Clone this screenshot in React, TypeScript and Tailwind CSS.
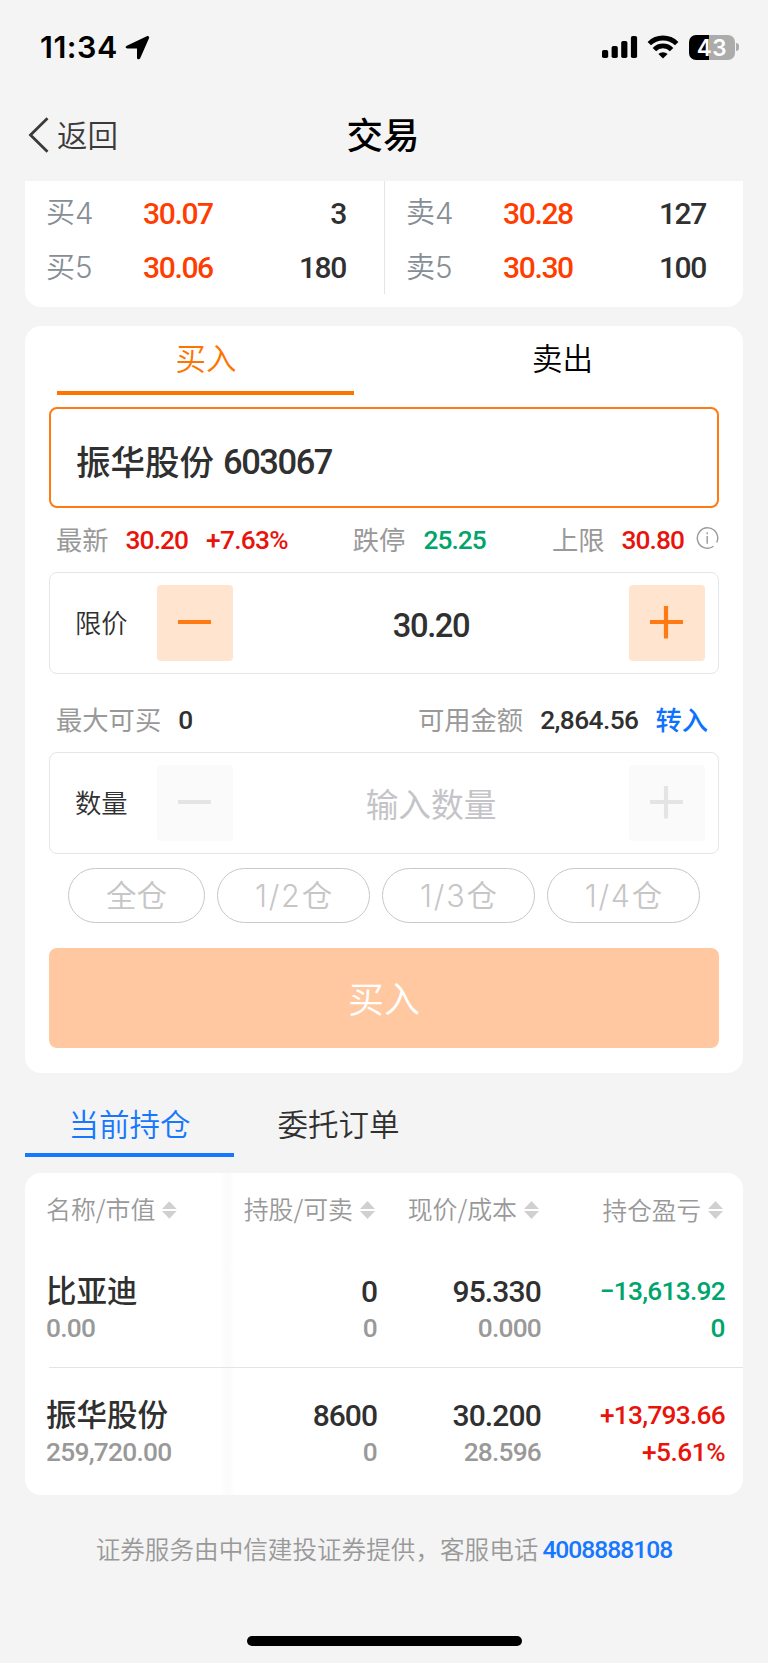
import { clsx } from "clsx";
import type { ReactNode } from "react";

const holdings = [
  {
    name: "比亚迪",
    value: "0.00",
    shares: "0",
    sellable: "0",
    price: "95.330",
    cost: "0.000",
    profit: "−13,613.92",
    rate: "0",
    up: false,
  },
  {
    name: "振华股份",
    value: "259,720.00",
    shares: "8600",
    sellable: "0",
    price: "30.200",
    cost: "28.596",
    profit: "+13,793.66",
    rate: "+5.61%",
    up: true,
  },
];

function Num({ children, className }: { children: ReactNode; className?: string }) {
  return (
    <span className={clsx("font-['Roboto',sans-serif] font-medium whitespace-nowrap", className)}>
      {children}
    </span>
  );
}

function StatusBar() {
  return (
    <div className="flex h-[95px] items-center pr-[29px] pb-[1px] pl-[40px]">
      <span className="font-['Inter',sans-serif] text-[30.500px] leading-[36px] font-semibold tracking-[0.5px] text-black">
        11:34
      </span>
      <svg className="ml-[7px] h-[25px] w-[25px]" viewBox="0 0 25 25">
        <path d="M1.800 10.800 21.800 1.200C23.400.500 24.700 1.800 24 3.300L15.200 23.200C14.500 24.900 12 24.500 12 22.700V13.500H2.500C.500 13.500 0 11.700 1.800 10.800Z" />
      </svg>

      <div className="ml-auto flex items-center">
        <svg className="h-[24px] w-[36px]" viewBox="0 0 36 24">
          <rect x="0" y="15" width="6.200" height="8" rx="1.800" />
          <rect x="9.600" y="11" width="6.200" height="12" rx="1.800" />
          <rect x="19.200" y="6" width="6.200" height="17" rx="1.800" />
          <rect x="28.900" y="1" width="6.200" height="22" rx="1.800" />
        </svg>
        <svg className="ml-[9px] h-[24px] w-[32px]" viewBox="0 0 32 24">
          <g fill="none" stroke="#000" strokeWidth="4.800">
            <path d="M2.300 8.600a19.500 19.500 0 0 1 27.400 0" />
            <path d="M7.400 14.600a12 12 0 0 1 17.200 0" />
          </g>
          <path d="M11.400 19a6.600 6.600 0 0 1 9.200 0L16 23.600Z" />
        </svg>
        {/* Battery, 43% filled */}
        <div className="ml-[10px] flex h-[25px] w-[46px] items-center justify-center rounded-[7px] bg-[linear-gradient(90deg,#000_43%,#acacac_43%)]">
          <span className="font-['Inter',sans-serif] text-[22.500px] leading-[25px] font-semibold tracking-[0.5px] text-white">
            43
          </span>
        </div>
        <div className="ml-[1px] h-[8px] w-[3px] rounded-r-full bg-[#acacac]" />
      </div>
    </div>
  );
}

function NavBar() {
  return (
    <div className="grid h-[86px] grid-cols-3 items-center px-[28px] pb-[6px]">
      <div className="flex items-center text-[30.500px] text-[#3a3a3a]">
        <svg className="h-[36px] w-[21px]" viewBox="0 0 21 36" fill="none" stroke="#3a3a3a" strokeWidth="2.800">
          <path d="M19.500 1.300 2.500 18l17 16.700" />
        </svg>
        <span className="ml-[8px] pb-[1px] font-[350]">返回</span>
      </div>
      <h1 className="pr-[2px] pb-[1px] text-center text-[36.500px] font-medium text-black">交易</h1>
    </div>
  );
}

function QuoteRow({ side, level, price, qty }: { side: string; level: number; price: string; qty: string }) {
  return (
    <div className="flex h-[54.500px] items-center text-[#868e96]">
      <span className="pb-[5px] text-[29px] font-[350]">{side}</span>
      <span className="w-[68px] pb-[1px] font-['Inter',sans-serif] text-[29.500px] font-light">{level}</span>
      <Num className="text-[30px] tracking-[-0.045em] text-[#ff3d00]">{price}</Num>
      <Num className="ml-auto text-[30px] tracking-[-0.045em] text-[#303030]">{qty}</Num>
    </div>
  );
}

function OrderBook() {
  return (
    <section className="flex h-[126px] rounded-b-[16px] bg-white">
      <div className="w-[359px] pt-[5px] pr-[38px] pl-[21px]">
        <QuoteRow side="买" level={4} price="30.07" qty="3" />
        <QuoteRow side="买" level={5} price="30.06" qty="180" />
      </div>
      <div className="h-[113px] w-px bg-[#e5e5e5]" />
      <div className="w-[358px] pt-[5px] pr-[37px] pl-[21px]">
        <QuoteRow side="卖" level={4} price="30.28" qty="127" />
        <QuoteRow side="卖" level={5} price="30.30" qty="100" />
      </div>
    </section>
  );
}

function StepButton({ plus, disabled }: { plus?: boolean; disabled?: boolean }) {
  return (
    <button
      className={clsx(
        "flex h-[76px] w-[76px] items-center justify-center rounded-[4px]",
        disabled ? "bg-[#fafafa] text-[#e4e4e4]" : "bg-[#ffe4d0] text-[#ff7a12]",
      )}
    >
      <svg className="h-[34px] w-[34px]" viewBox="0 0 34 34" stroke="currentColor" strokeWidth="4.200">
        <path d="M0 16H33" />
        {plus && <path d="M16-.500V32.500" />}
      </svg>
    </button>
  );
}

function Stepper({ label, disabled, children }: { label: string; disabled?: boolean; children: ReactNode }) {
  return (
    <div className="flex h-[102px] items-center rounded-[8px] border border-[#e6e6e6] pr-[13px] pl-[25px]">
      <span className="w-[82px] pb-[3px] text-[26.300px] font-[350] text-[#303030]">{label}</span>
      <StepButton disabled={disabled} />
      <div className="flex-1 text-center">{children}</div>
      <StepButton plus disabled={disabled} />
    </div>
  );
}

function TradeForm() {
  return (
    <section className="mt-[19px] h-[747px] rounded-[16px] bg-white">
      <div className="grid h-[69px] grid-cols-2 px-[2px] text-center text-[30.500px] leading-[63px] font-[350]">
        <button className="flex flex-col items-center text-[#ff7300]">
          <span className="h-[65px] pl-[1px]">买入</span>
          <span className="h-[4px] w-[297px] bg-[#ff7300]" />
        </button>
        <button className="flex h-[65px] justify-center text-black">卖出</button>
      </div>

      <div className="px-[24px] pt-[12px]">
        <div className="flex h-[101px] items-center rounded-[8px] border-2 border-[#ff7a12] pt-[7px] pl-[25px] text-[#303030]">
          <span className="text-[34.500px] font-medium">振华股份</span>
          <Num className="ml-[9px] pt-[3px] text-[34.500px] tracking-[-0.042em]">603067</Num>
        </div>

        <div className="flex h-[64px] items-center pl-[7px] text-[26.300px] text-[#999]">
          <span className="pb-[2px]">最新</span>
          <Num className="ml-[17px] pt-[2px] tracking-[-0.035em] text-[#e8140c]">30.20</Num>
          <Num className="ml-[18px] pt-[2px] tracking-[-0.028em] text-[#e8140c]">+7.63%</Num>
          <span className="ml-auto pb-[2px]">跌停</span>
          <Num className="ml-[18px] pt-[2px] tracking-[-0.035em] text-[#00a46c]">25.25</Num>
          <span className="ml-[66px] pb-[2px]">上限</span>
          <Num className="ml-[17px] pt-[2px] tracking-[-0.035em] text-[#e8140c]">30.80</Num>
          <svg className="mb-[4px] ml-[12px] h-[22px] w-[23px]" viewBox="0 0 23 22" fill="none" stroke="#999" strokeWidth="1.400">
            <path d="M17.500 19.300a10.200 10.200 0 1 1 3.200-3.800" />
            <path d="M11.200 9v7.800M11.200 5.300v2" />
          </svg>
        </div>

        <Stepper label="限价">
          <Num className="inline-block pt-[7px] text-[32.700px] tracking-[-0.042em] text-[#303030]">30.20</Num>
        </Stepper>

        <div className="flex h-[78px] items-center pt-[13px] pr-[11px] pl-[7px] text-[26.300px] text-[#999]">
          <span className="pb-[2px]">最大可买</span>
          <Num className="ml-[17px] pt-[2px] text-[#303030]">0</Num>
          <span className="ml-auto pb-[2px]">可用金额</span>
          <Num className="ml-[17px] pt-[2px] tracking-[-0.022em] text-[#303030]">2,864.56</Num>
          <span className="ml-[17px] pb-[2px] font-medium text-[#0d72ff]">转入</span>
        </div>

        <Stepper label="数量" disabled>
          <span className="text-[32.700px] text-[#c4c4c8]">输入数量</span>
        </Stepper>

        <div className="mt-[14px] flex gap-[12px] pl-[19px] text-[30.500px] leading-[50px] font-[350] text-[#c6c6c6]">
          <button className="flex h-[55px] w-[137px] justify-center rounded-full border border-[#c8c8c8]">全仓</button>
          {["1/2", "1/3", "1/4"].map((part) => (
            <button key={part} className="flex h-[55px] w-[153px] justify-center rounded-full border border-[#c8c8c8]">
              <span className="pt-[2px] font-['Inter',sans-serif] text-[30.500px] font-light tracking-[1.800px]">{part}</span>
              <span>仓</span>
            </button>
          ))}
        </div>

        <button className="mt-[25px] h-[100px] w-full rounded-[8px] bg-[#ffc8a0] pb-[2px] text-[36px] font-[350] text-white">
          买入
        </button>
      </div>
    </section>
  );
}

function HeadCell({ children, className }: { children: ReactNode; className?: string }) {
  return (
    <div className={clsx("flex items-center justify-end", className)}>
      <span className="pb-[2px] whitespace-nowrap">{children}</span>
      <svg className="ml-[7px] h-[18px] w-[15px]" viewBox="0 0 15 18" fill="#d0d0d0">
        <path d="M7.500 0 15 8H0ZM7.500 18 15 10H0Z" />
      </svg>
    </div>
  );
}

function Cell({ top, bottom, className }: { top: ReactNode; bottom: ReactNode; className?: string }) {
  return (
    <div className={clsx("flex flex-col", className)}>
      <div className="flex h-[38px] items-center justify-end">{top}</div>
      <div className="flex h-[38px] items-center justify-end text-[26.300px]">{bottom}</div>
    </div>
  );
}

function Holdings() {
  return (
    <section className="relative h-[322px] rounded-[16px] bg-white">
      {/* Soft edge of the frozen first column */}
      <div className="absolute inset-y-0 left-[196px] w-[13px] bg-gradient-to-r from-[#fefefe] via-[#fbfbfb] to-[#fefefe]" />
      <div className="relative flex h-[74px] pr-[20px] pl-[21px] text-[24.900px] font-[350] text-[#999]">
        <HeadCell className="w-[131px]">名称/市值</HeadCell>
        <HeadCell className="w-[198px]">持股/可卖</HeadCell>
        <HeadCell className="w-[164px]">现价/成本</HeadCell>
        <HeadCell className="flex-1 text-[24.600px]">持仓盈亏</HeadCell>
      </div>
      {holdings.map((h, i) => (
        <div key={h.name} className="relative">
          {i > 0 && <div className="ml-[24px] h-px bg-[#e4e4e4]" />}
          <div
            className={clsx(
              "flex pr-[18px] pl-[21px] text-[30px] text-[#303030]",
              i === 0 ? "h-[120px] pt-[25px]" : "h-[123px] pt-[28px]",
            )}
          >
            <div className="w-[179px]">
              <div className="flex h-[38px] items-center pb-[3px] text-[30.500px] font-medium">{h.name}</div>
              <div className="flex h-[38px] items-center">
                <Num className="text-[26.300px] tracking-[-0.028em] text-[#999]">{h.value}</Num>
              </div>
            </div>
            <Cell
              className="w-[152px]"
              top={<Num className="tracking-[-0.033em]">{h.shares}</Num>}
              bottom={<Num className="tracking-[-0.03em] text-[#999]">{h.sellable}</Num>}
            />
            <Cell
              className="w-[164px]"
              top={<Num className="tracking-[-0.028em]">{h.price}</Num>}
              bottom={<Num className="tracking-[-0.03em] text-[#999]">{h.cost}</Num>}
            />
            <Cell
              className={clsx("flex-1", h.up ? "text-[#e8140c]" : "text-[#00a46c]")}
              top={<Num className="pt-[1px] text-[26.300px] tracking-[-0.028em]">{h.profit}</Num>}
              bottom={<Num className="tracking-[-0.02em]">{h.rate}</Num>}
            />
          </div>
        </div>
      ))}
    </section>
  );
}

export default function App() {
  return (
    <main className="flex h-[1663px] w-[768px] flex-col overflow-hidden bg-[#f4f4f4] font-['Noto_Sans_CJK_SC',sans-serif]">
      <StatusBar />
      <NavBar />
      <div className="px-[25px]">
        <OrderBook />
        <TradeForm />

        <div className="flex h-[100px] text-[30.500px] leading-[100px] font-[350]">
          <button className="flex w-[209px] flex-col items-center text-[#1677ff]">
            <span className="h-[80px]">当前持仓</span>
            <span className="h-[4px] w-full bg-[#1677ff]" />
          </button>
          <button className="flex h-[80px] w-[209px] justify-center text-[#303030]">委托订单</button>
        </div>

        <Holdings />

        <div className="flex h-[110px] items-center justify-center text-[24.600px] font-[350] text-[#999]">
          <span className="pb-[3px]">证券服务由中信建投证券提供，客服电话</span>
          <Num className="ml-[4px] text-[24.600px] tracking-[-0.04em] text-[#1677ff]">4008888108</Num>
        </div>
      </div>
      <div className="mt-[31px] ml-[247px] h-[10px] w-[275px] rounded-full bg-black" />
    </main>
  );
}
